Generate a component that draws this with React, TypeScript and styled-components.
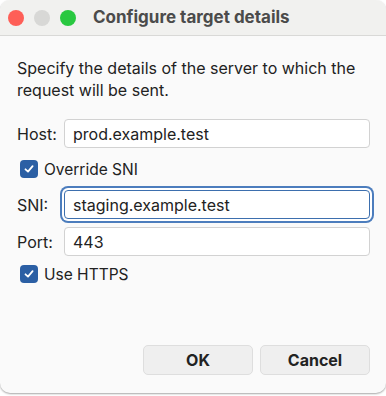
import React, { FC } from "react";
import styled, { createGlobalStyle } from "styled-components";

const GlobalStyle = createGlobalStyle`
  html, body {
    margin: 0;
    padding: 0;
    background: #ffffff;
    overflow: hidden;
  }
  body {
    font-family: Inter, "Liberation Sans", Arial, sans-serif;
  }
`;

const Page = styled.div`
  width: 386px;
  height: 396px;
  overflow: hidden;
  background: #ffffff;
`;

const Window = styled.div`
  width: 386px;
  height: 393px;
  box-sizing: border-box;
  border-radius: 10px;
  background: #fafafa;
  box-shadow: 0 1px 2px rgba(0, 0, 0, 0.35);
  display: flex;
  flex-direction: column;
  overflow: hidden;
`;

const TitleBar = styled.div`
  height: 35px;
  flex: none;
  display: flex;
  align-items: center;
  background: #f1f1ef;
  border-bottom: 1px solid #d9d9d7;
  padding-left: 8px;
  gap: 10px;
`;

const Light = styled.span<{ $color: string }>`
  width: 16px;
  height: 16px;
  border-radius: 50%;
  background: ${(p) => p.$color};
`;

const Title = styled.div`
  margin-left: 7px;
  font-size: 17px;
  font-weight: 700;
  color: #4b4b4b;
  margin-top: -1px;
`;

const Body = styled.div`
  flex: 1;
  display: flex;
  flex-direction: column;
  padding: 21px 16px 0 17px;
`;

const Description = styled.p`
  margin: 0 0 18px;
  font-size: 16px;
  line-height: 22px;
  color: #222222;
`;

const Row = styled.div<{ $mt?: number }>`
  display: flex;
  align-items: center;
  margin-top: ${(p) => p.$mt ?? 0}px;
`;

const Label = styled.label`
  width: 47px;
  flex: none;
  font-size: 16px;
  color: #222222;
`;

const Input = styled.input<{ $focused?: boolean }>`
  flex: 1;
  height: 29px;
  box-sizing: border-box;
  border: 1px solid ${(p) => (p.$focused ? "#3d6fae" : "#d2d2d2")};
  border-radius: 4px;
  background: #ffffff;
  padding: 0 8px;
  font-family: Inter, "Liberation Sans", Arial, sans-serif;
  font-size: 16px;
  color: #222222;
  outline: none;
  box-shadow: ${(p) => (p.$focused ? "0 0 0 2px #ffffff, 0 0 0 4px #4c7dbd" : "none")};
`;

const CheckRow = styled.label<{ $mt: number }>`
  display: flex;
  align-items: center;
  gap: 6px;
  margin-top: ${(p) => p.$mt}px;
  padding-left: 3px;
  font-size: 15.5px;
  color: #222222;
  height: 22px;
`;

const Box = styled.span`
  width: 18px;
  height: 18px;
  border-radius: 4px;
  background: #2b5fa4;
  display: flex;
  align-items: center;
  justify-content: center;
`;

const Buttons = styled.div`
  margin-top: auto;
  margin-bottom: 18px;
  display: flex;
  justify-content: flex-end;
  gap: 7px;
`;

const Button = styled.button`
  width: 110px;
  height: 30px;
  border: 1px solid #dedede;
  border-radius: 5px;
  background: #efefef;
  font-family: Inter, "Liberation Sans", Arial, sans-serif;
  font-size: 16px;
  font-weight: 700;
  color: #222222;
`;

const Check: FC<{ label: string; mt: number }> = ({ label, mt }) => (
  <CheckRow $mt={mt}>
    <Box>
      <svg width="12" height="12" viewBox="0 0 12 12">
        <path d="M2.5 6.3 L5 8.6 L9.6 3.2" fill="none" stroke="#fff" strokeWidth="1.8" strokeLinecap="round" strokeLinejoin="round" />
      </svg>
    </Box>
    {label}
  </CheckRow>
);

const App: FC = () => (
  <Page>
    <GlobalStyle />
    <Window>
      <TitleBar>
        <Light $color="#fe5f57" />
        <Light $color="#d8d8d6" />
        <Light $color="#29c840" />
        <Title>Configure target details</Title>
      </TitleBar>
      <Body>
        <Description>
          Specify the details of the server to which the
          <br />
          request will be sent.
        </Description>
        <Row>
          <Label>Host:</Label>
          <Input defaultValue="prod.example.test" />
        </Row>
        <Check label="Override SNI" mt={10} />
        <Row $mt={10}>
          <Label>SNI:</Label>
          <Input $focused defaultValue="staging.example.test" />
        </Row>
        <Row $mt={8}>
          <Label>Port:</Label>
          <Input defaultValue="443" />
        </Row>
        <Check label="Use HTTPS" mt={7} />
        <Buttons>
          <Button>OK</Button>
          <Button>Cancel</Button>
        </Buttons>
      </Body>
    </Window>
  </Page>
);

export default App;
